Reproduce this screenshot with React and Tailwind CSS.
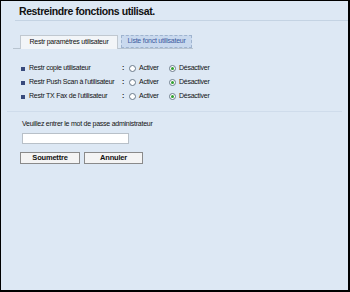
export default function App() {
  const rows = [
    "Restr copie utilisateur",
    "Restr Push Scan à l'utilisateur",
    "Restr TX Fax de l'utilisateur",
  ];
  const Radio = ({ checked }) => (
    <span className="inline-flex items-center justify-center w-[7px] h-[7px] rounded-full border border-[#6a7a8a] bg-white shrink-0">
      {checked && <span className="w-[3px] h-[3px] rounded-full bg-[#2fa02f]" />}
    </span>
  );
  return (
    <div className="w-[350px] h-[292px] border border-black border-r-2 border-b-2 bg-[#dde8f4] overflow-hidden whitespace-nowrap" style={{ fontFamily: '"Liberation Sans", Arial, sans-serif' }}>
      <div className="pl-[18px] pt-[4px] pb-[2px] text-[10.5px] tracking-[-0.4px] font-bold text-[#111] leading-[13px]">Restreindre fonctions utilisat.</div>
      <div className="ml-[14px] h-px bg-[#c4d3e3]" />
      <div className="pl-[12px] pt-[14px]">
        <div className="flex items-end w-[180px] border-b border-[#b8c4d0]">
          <div className="ml-[7px] w-[98px] h-[14px] flex items-center justify-center bg-[#f2f5f8] border border-b-0 border-[#c0c8d0] text-[7px] tracking-[-0.25px] text-[#111] mb-[-1px]">Restr paramètres utilisateur</div>
          <div className="ml-[3px] w-[71px] h-[13px] flex items-center justify-center bg-[#c9d9ee] border border-dashed border-[#9fb4cf] text-[7px] tracking-[-0.25px] text-[#3b5aa0]">Liste fonct utilisateur</div>
        </div>
      </div>
      <div className="pt-[15px] pl-[20px] flex flex-col gap-[5px]">
        {rows.map((r) => (
          <div key={r} className="flex items-center h-[9px] text-[7px] tracking-[-0.25px] text-[#111]">
            <span className="w-[4px] h-[4px] bg-[#384a7c] mr-[4px] shrink-0" />
            <span className="w-[93px]">{r}</span>
            <span className="w-[7px] font-bold">:</span>
            <Radio />
            <span className="ml-[3px] w-[30px]">Activer</span>
            <Radio checked />
            <span className="ml-[3px]">Désactiver</span>
          </div>
        ))}
      </div>
      <div className="mt-[10px] mx-[6px] h-px bg-[#cfdceb]" />
      <div className="pl-[21px] pt-[7px] text-[7px] tracking-[-0.25px] text-[#111]">Veuillez entrer le mot de passe administrateur</div>
      <div className="pl-[21px] pt-[3px]">
        <div className="w-[107px] h-[11px] bg-white border border-[#b8c0c8]" />
      </div>
      <div className="pl-[19px] pt-[8px] flex gap-[4px]">
        <button className="w-[60px] h-[12px] bg-[#f4f4f4] border border-[#8a8a8a] text-[7.5px] tracking-[-0.2px] font-bold text-[#111] leading-none">Soumettre</button>
        <button className="w-[59px] h-[12px] bg-[#f4f4f4] border border-[#8a8a8a] text-[7.5px] tracking-[-0.2px] font-bold text-[#111] leading-none">Annuler</button>
      </div>
    </div>
  );
}
